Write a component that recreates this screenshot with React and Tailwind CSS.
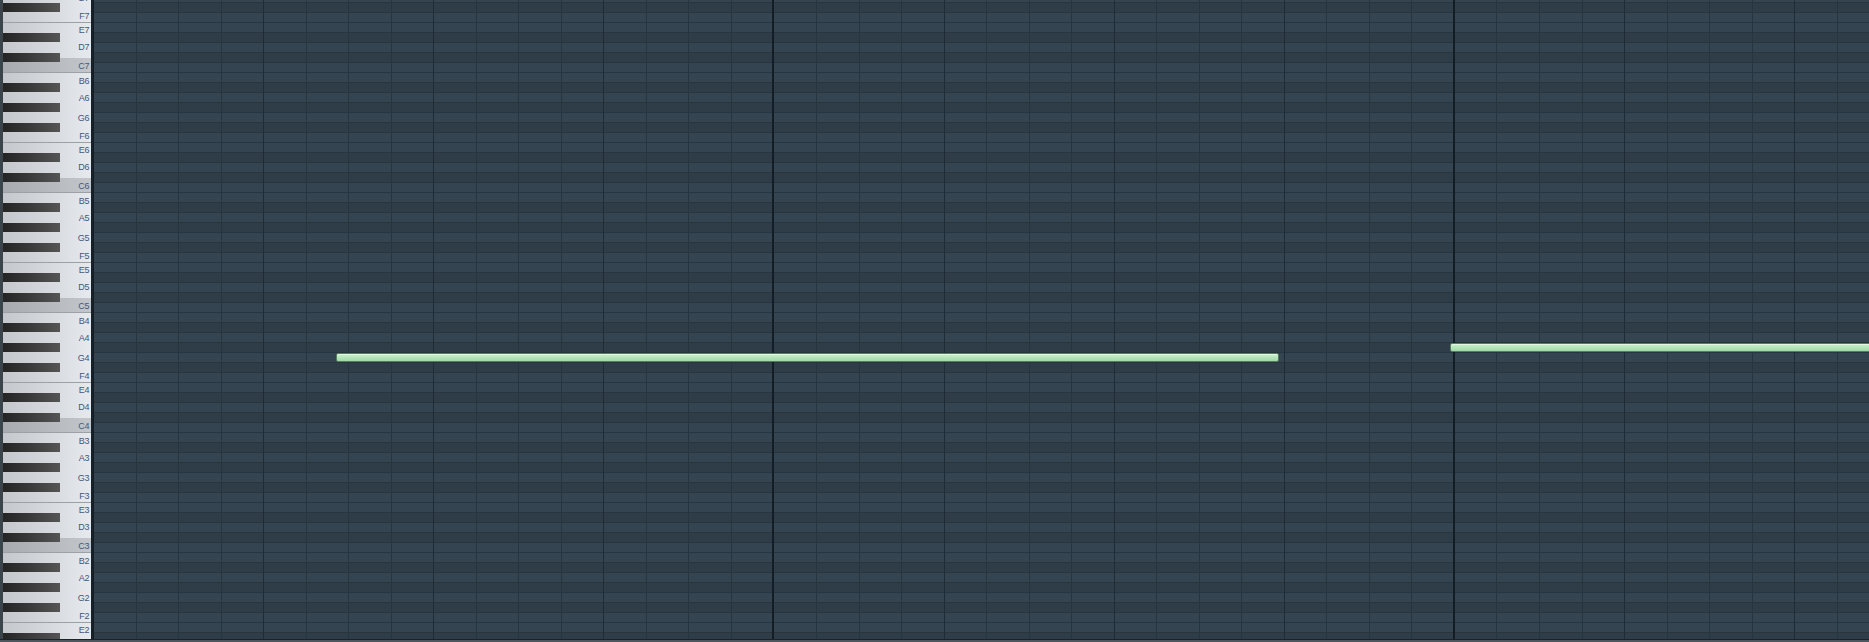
import React from 'react';

const NAMES = ['C', 'C#', 'D', 'D#', 'E', 'F', 'F#', 'G', 'G#', 'A', 'A#', 'B'];
const TOP_PITCH = 103; // G7, half cut off at the top
const LOW_PITCH = 38;  // D2
const ROW = 10;
const BEAT = 42.53;
const GRID_W = 1776;
const GRID_H = 639;

// labels sit on the white keys, which are not row aligned
const LABEL_OFFSET = {
  C: 'translate-y-0',
  D: 'translate-y-[1px]',
  E: 'translate-y-[3px]',
  F: 'translate-y-0',
  G: 'translate-y-[2px]',
  A: 'translate-y-[2px]',
  B: 'translate-y-[4px]',
};

const pitches = [];
for (let p = TOP_PITCH; p >= LOW_PITCH; p--) pitches.push(p);

const isBlack = (p) => NAMES[p % 12].includes('#');
const rowTop = (p) => 62 + (96 - p) * ROW;

const NOTES = [
  { left: 243, top: 353, width: 943 },
  { left: 1357, top: 343, width: 520 },
];

function KeyRow({ p }) {
  const name = NAMES[p % 12];
  const octave = Math.floor(p / 12) - 1;
  if (isBlack(p)) {
    return (
      <div className="h-[10px] pt-[1px] bg-gradient-to-r from-[#c4c8cc] to-[#e6e9ed]">
        <div className="relative z-10 h-[9px] w-[57px] bg-gradient-to-r from-[#242424] to-[#555555]" />
      </div>
    );
  }
  const isC = name === 'C';
  const edge = name === 'E' || name === 'B';
  return (
    <div
      className={`relative h-[10px] ${isC ? 'bg-gradient-to-r from-[#a7abaf] to-[#c3c7cb]' : 'bg-gradient-to-r from-[#c4c8cc] to-[#e6e9ed]'} ${edge ? 'border-t border-[#9ca1a6]' : ''}`}
    >
      {isC && (
        <div className="absolute left-0 right-0 -top-[4px] h-[4px] bg-gradient-to-r from-[#a7abaf] to-[#c3c7cb]" />
      )}
      <div className={`relative z-20 flex justify-end pr-[2px] text-[9px] leading-[8px] tracking-[-0.4px] text-[#44577a] font-['Liberation_Sans',Arial,sans-serif] ${LABEL_OFFSET[name]}`}>
        {name}{octave}
      </div>
    </div>
  );
}

function Grid() {
  const lines = [];
  const beats = Math.ceil(GRID_W / BEAT) + 1;
  for (let k = 0; k < beats; k++) {
    const x = Math.round(k * BEAT);
    let color = '#27353f';
    let w = 1;
    if (k % 16 === 0) { color = '#131d26'; w = 2; }
    else if (k % 4 === 0) color = '#1f2c36';
    lines.push(<rect key={`v${k}`} x={x - (w > 1 ? 1 : 0)} y={0} width={w} height={GRID_H} fill={color} />);
  }
  return (
    <svg width={GRID_W} height={GRID_H} shapeRendering="crispEdges" className="block">
      {pitches.map((p) => (
        <g key={p}>
          <rect x={0} y={rowTop(p)} width={GRID_W} height={ROW} fill={isBlack(p) ? '#2e3d48' : '#344551'} />
          <rect x={0} y={rowTop(p)} width={GRID_W} height={1} fill="#28353f" />
        </g>
      ))}
      {lines}
    </svg>
  );
}

export default function App() {
  return (
    <div className="w-[1869px] h-[642px] overflow-hidden flex flex-col bg-[#2e3d48]">
      <div className="flex h-[639px] overflow-hidden">
        {/* Keyboard */}
        <div className="flex w-[91px] shrink-0 bg-[#3b444a]">
          <div className="w-[3px] shrink-0 bg-[#3b444a]" />
          <div className="flex-1 -mt-[8px]">
            {pitches.map((p) => <KeyRow key={p} p={p} />)}
          </div>
        </div>
        <div className="w-[2px] shrink-0 bg-[#172129]" />

        {/* Note grid */}
        <div className="relative flex-1 overflow-hidden">
          <Grid />
          {NOTES.map((n, i) => (
            <div
              key={i}
              className="absolute h-[9px] rounded-[2px] border border-[#587c60] bg-gradient-to-b from-[#cdf1cf] to-[#9fd9a7] shadow-[inset_0_1px_0_#e2f8e2]"
              style={{ left: n.left, top: n.top, width: n.width }}
            />
          ))}
        </div>
      </div>
      <div className="h-[3px] border-t border-[#1a2329] bg-[#4c565c]" />
    </div>
  );
}
